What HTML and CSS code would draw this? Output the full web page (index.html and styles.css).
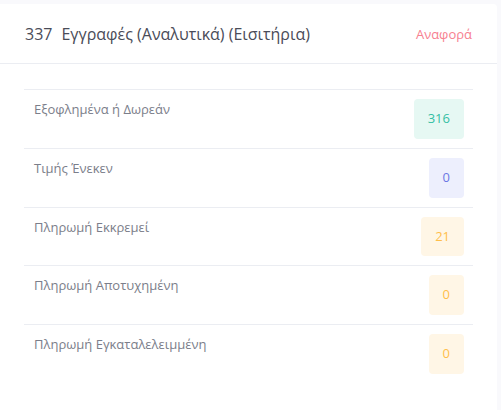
FILE: index.html
```html
<!DOCTYPE html>
<html lang="el">
<head>
<meta charset="utf-8">
<link rel="stylesheet" href="styles.css">
</head>
<body>
<div class="card">
  <div class="card-head">
    <h3 class="title"><span class="count">337</span>Εγγραφές (Αναλυτικά) (Εισιτήρια)</h3>
    <a class="report">Αναφορά</a>
  </div>
  <div class="card-body">
    <div class="list">
      <div class="row"><span class="label">Εξοφλημένα ή Δωρεάν</span><span class="badge success">316</span></div>
      <div class="row"><span class="label">Τιμής Ένεκεν</span><span class="badge primary">0</span></div>
      <div class="row"><span class="label">Πληρωμή Εκκρεμεί</span><span class="badge warning">21</span></div>
      <div class="row"><span class="label">Πληρωμή Αποτυχημένη</span><span class="badge warning">0</span></div>
      <div class="row"><span class="label">Πληρωμή Εγκαταλελειμμένη</span><span class="badge warning">0</span></div>
    </div>
  </div>
</div>
</body>
</html>
```
FILE: styles.css
```css
html, body {
  margin: 0;
  padding: 0;
  background: #f9f9fc;
  font-family: "Open Sans", "Liberation Sans", sans-serif;
}
.card {
  margin: 4px 4px 0 0;
  background: #fff;
  border-top-right-radius: 4px;
  height: 420px;
}
.card-head {
  height: 59px;
  padding: 0 25px;
  display: flex;
  align-items: center;
  justify-content: space-between;
  border-bottom: 1px solid #ebedf2;
}
.title {
  margin: 0;
  font-size: 16px;
  font-weight: 400;
  color: #4a4c58;
}
.count {
  margin-right: 9px;
}
.report {
  font-size: 13px;
  color: #f7808f;
}
.card-body {
  padding: 25px 24px 0;
}
.row {
  display: flex;
  justify-content: space-between;
  align-items: flex-start;
  border-top: 1px solid #ebedf2;
  padding: 9px 9px 9px 10px;
}
.label {
  font-size: 13px;
  line-height: 20px;
  color: #7b7e8a;
}
.badge {
  font-size: 13px;
  line-height: 19.75px;
  padding: 10px 14px;
  border-radius: 4px;
}
.success { background: #e6f8f3; color: #34bfa3; }
.primary { background: #edeffd; color: #6c77e4; }
.warning { background: #fff6e6; color: #ffbe4a; }
```
